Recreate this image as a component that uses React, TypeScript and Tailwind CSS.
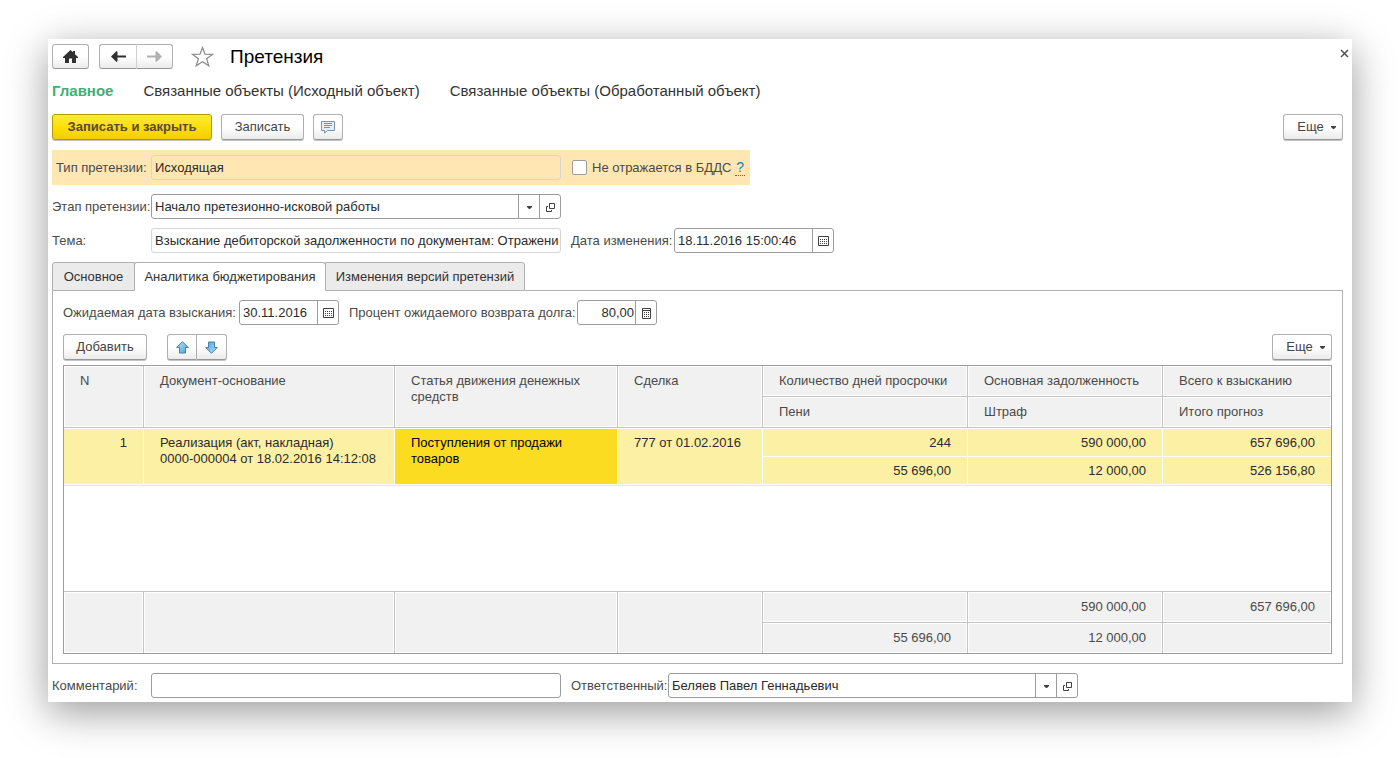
import type { ReactNode } from "react";

const textCell = "border-r border-b border-[#c4c4c4] bg-[#f1f1f1] shadow-[inset_0_0_0_1px_white] px-4 font-normal";
const headCell = textCell + " pt-[7px] text-left align-top leading-4";
const footCell = textCell + " text-right align-middle";
const rowCell = "border-r border-b border-white bg-[#fcf0a5] px-4";
const topCell = rowCell + " border-t pt-[6px] align-top leading-4";

const HomeIcon = () => (
  <svg width="15" height="13" viewBox="0 0 15 13" fill="#303030">
    <path d="M7.500 0 10 2.300V1h2v3.200L15 7V8H13v5H9V8.500H6V13H2V8H0V7Z" />
  </svg>
);

const ArrowIcon = ({ color, flip }: { color: string; flip?: boolean }) => (
  <svg width="15" height="11" viewBox="0 0 15 11" className={flip ? "-scale-x-100" : ""}>
    <path d="M0 5.500 5.500 0 6.500 1V4.500H15V6.500H6.500V10L5.500 11Z" fill={color} />
  </svg>
);

const StarIcon = () => (
  <svg width="23" height="21" viewBox="0 0 23 21" fill="white" stroke="#8a8a8a" strokeWidth="1.200">
    <path d="M11.500 1.500 14 8.200 21.500 8.400 15.600 12.800 17.800 19.800 11.500 15.700 5.200 19.800 7.400 12.800 1.500 8.400 9 8.200Z" />
  </svg>
);

const CommentIcon = () => (
  <svg width="14" height="13" viewBox="0 0 14 13" fill="none" stroke="#6f96b8">
    <path d="M.5 .5H13.500V9.500H6.500L3.500 12V9.500H.5Z" fill="#e3eef7" />
    <path d="M3 2.500H11M3 4.500H11M3 6.500H9" />
  </svg>
);

const MoveIcon = ({ down }: { down?: boolean }) => (
  <svg width="13" height="13" viewBox="0 0 13 13" className={down ? "rotate-180" : ""}>
    <defs>
      <linearGradient id={down ? "moveDown" : "moveUp"} x1="0" y1="0" x2="1" y2="1">
        <stop offset="0" stopColor="#b4e0f8" />
        <stop offset="1" stopColor="#4ba3da" />
      </linearGradient>
    </defs>
    <path d="M6.500 .7 12.300 6.500H9.500V12H3.500V6.500H.7Z" fill={down ? "url(#moveDown)" : "url(#moveUp)"} stroke="#4480aa" />
  </svg>
);

const CaretIcon = () => (
  <svg width="5" height="3" viewBox="0 0 5 3" fill="#404040">
    <path d="M0 0H5V1L3 3H2L0 1Z" />
  </svg>
);

const OpenIcon = () => (
  <svg width="9" height="9" viewBox="0 0 9 9" fill="none" stroke="#404040">
    <path d="M3.500 .5H8.500V5.500H3.500ZM2 3.500H.5V8.500H5.500V7" />
  </svg>
);

const CalendarIcon = () => (
  <svg width="11" height="10" viewBox="0 0 11 10" fill="none" stroke="#404040">
    <path d="M.5 .5H10.500V9.500H.5Z" />
    <path d="M2 3.500H9M2 5.500H9M2 7.500H9" strokeDasharray="1 1" />
  </svg>
);

const CalcIcon = () => (
  <svg width="9" height="11" viewBox="0 0 9 11" fill="none" stroke="#404040">
    <path d="M.5 .5H8.500V10.500H.5ZM.5 2.500H8.500" />
    <path d="M2 4.500H7M2 6.500H7M2 8.500H7" strokeDasharray="1 1" />
  </svg>
);

const buttonBase =
  "flex items-center justify-center border border-[#b0b0b0] border-b-[#979797] bg-gradient-to-b from-white from-50% to-[#ebebeb] text-[#444]";

const Button = ({ children, className = "", label }: { children: ReactNode; className?: string; label?: string }) => (
  <button type="button" aria-label={label} className={`${buttonBase} h-[26px] rounded-[3px] shadow-[0_1px_0_#c4c4c4] ${className}`}>
    {children}
  </button>
);

const MoreButton = () => (
  <Button className="w-[60px] gap-[7px] pl-[7px]">
    Еще
    <CaretIcon />
  </Button>
);

const FieldButton = ({ label, children }: { label: string; children: ReactNode }) => (
  <button type="button" aria-label={label} className="flex w-[21px] shrink-0 items-center justify-center border-l border-[#9c9c9c] pt-px">
    {children}
  </button>
);

type FieldProps = { id: string; value?: string; className?: string; inputClass?: string; readOnly?: boolean; children?: ReactNode };

const Field = ({ id, value = "", className = "", inputClass = "", readOnly, children }: FieldProps) => (
  <div className={`flex h-[25px] overflow-hidden rounded-[3px] border ${readOnly ? "border-[#d6d6d6]" : "border-[#9c9c9c]"} ${className}`}>
    <input id={id} type="text" defaultValue={value} readOnly={readOnly} className={`w-0 min-w-0 flex-1 bg-transparent pr-px pl-[3px] text-[#2b2b2b] outline-none ${inputClass}`} />
    {children}
  </div>
);

const SelectField = ({ id, value }: { id: string; value: string }) => (
  <div className="flex h-[25px] w-[410px] rounded-[3px] border border-[#9c9c9c]">
    <div className="relative flex-1">
      <select id={id} className="h-full w-full appearance-none bg-transparent px-[3px] text-[#2b2b2b] outline-none">
        <option>{value}</option>
      </select>
      <span className="pointer-events-none absolute inset-y-0 right-0 flex w-[21px] items-center justify-center border-l border-[#9c9c9c] pt-px">
        <CaretIcon />
      </span>
    </div>
    <FieldButton label="Открыть">
      <OpenIcon />
    </FieldButton>
  </div>
);

const topHeads = ["Количество дней просрочки", "Основная задолженность", "Всего к взысканию"];
const bottomHeads = ["Пени", "Штраф", "Итого прогноз"];

const ClaimTable = () => (
  <div className="mt-1 border border-[#9c9c9c]">
    <table className="w-full table-fixed border-separate border-spacing-0 text-[#4a4a4a] [&_tr>*:last-child]:border-r-0">
      <colgroup>
        <col className="w-[80px]" />
        <col />
        <col className="w-[223px]" />
        <col className="w-[145px]" />
        <col className="w-[205px]" />
        <col className="w-[195px]" />
        <col className="w-[168px]" />
      </colgroup>
      <thead>
        <tr className="h-[31px]">
          <th rowSpan={2} className={headCell}>N</th>
          <th rowSpan={2} className={headCell}>Документ-основание</th>
          <th rowSpan={2} className={headCell}>Статья движения денежных средств</th>
          <th rowSpan={2} className={headCell}>Сделка</th>
          {topHeads.map((head) => (
            <th key={head} className={headCell}>{head}</th>
          ))}
        </tr>
        <tr className="h-[31px]">
          {bottomHeads.map((head) => (
            <th key={head} className={headCell}>{head}</th>
          ))}
        </tr>
      </thead>
      <tbody className="text-[#2b2b2b]">
        <tr className="h-[29px]">
          <td rowSpan={2} className={`${topCell} text-right`}>1</td>
          <td rowSpan={2} className={topCell}>
            Реализация (акт, накладная)
            <br />
            0000-000004 от 18.02.2016 14:12:08
          </td>
          <td rowSpan={2} className="border-t border-r border-b border-white bg-[#fcdc20] px-4 pt-[6px] align-top leading-4 text-black">
            Поступления от продажи товаров
          </td>
          <td rowSpan={2} className={topCell}>777 от 01.02.2016</td>
          <td className={`${topCell} text-right`}>244</td>
          <td className={`${topCell} text-right`}>590 000,00</td>
          <td className={`${topCell} text-right`}>657 696,00</td>
        </tr>
        <tr className="h-[28px]">
          <td className={`${rowCell} text-right`}>55 696,00</td>
          <td className={`${rowCell} text-right`}>12 000,00</td>
          <td className={`${rowCell} text-right`}>526 156,80</td>
        </tr>
        <tr className="h-[107px]">
          <td colSpan={7} className="border-t border-b border-t-[#e4e4e4] border-b-[#c4c4c4]" />
        </tr>
      </tbody>
      <tfoot className="[&_tr:last-child>*]:border-b-0">
        <tr className="h-[31px]">
          <td className={`${footCell} border-b-0`} rowSpan={2} />
          <td className={`${footCell} border-b-0`} rowSpan={2} />
          <td className={`${footCell} border-b-0`} rowSpan={2} />
          <td className={`${footCell} border-b-0`} rowSpan={2} />
          <td className={footCell} />
          <td className={footCell}>590 000,00</td>
          <td className={footCell}>657 696,00</td>
        </tr>
        <tr className="h-[30px]">
          <td className={footCell}>55 696,00</td>
          <td className={footCell}>12 000,00</td>
          <td className={footCell} />
        </tr>
      </tfoot>
    </table>
  </div>
);

const tabBase = "border border-[#b0b0b0] whitespace-nowrap text-[#333]";

export default function App() {
  return (
    <div className="px-12 pt-[39px] pb-14 font-['Liberation_Sans',Arial,sans-serif] text-[13px] text-[#4a4a4a]">
      <main className="bg-white pt-[5px] pr-[9px] pb-1 pl-1 shadow-[0_10px_38px_rgba(0,0,0,0.4)]">
        <header className="flex items-center">
          <button type="button" aria-label="Главная" className={`${buttonBase} h-[25px] w-[37px] rounded-[3px] border-[#a0a0a0]`}>
            <HomeIcon />
          </button>
          <div className="ml-[10px] flex">
            <button type="button" aria-label="Назад" className={`${buttonBase} h-[25px] w-[38px] rounded-l-[3px] border-[#a0a0a0] border-r-[#d0d0d0]`}>
              <ArrowIcon color="#303030" />
            </button>
            <button type="button" aria-label="Вперед" className={`${buttonBase} h-[25px] w-[36px] rounded-r-[3px] border-l-0 border-[#a0a0a0]`}>
              <ArrowIcon color="#b0b0b0" flip />
            </button>
          </div>
          <button type="button" aria-label="В избранное" className="ml-[18px]">
            <StarIcon />
          </button>
          <h1 className="ml-4 text-[19px] leading-6 text-black">Претензия</h1>
          <button type="button" aria-label="Закрыть" className="-mr-[6px] ml-auto pb-[6px]">
            <svg width="9" height="9" viewBox="0 0 9 9" stroke="#505050" strokeWidth="1.500">
              <path d="M1 1 8 8M8 1 1 8" />
            </svg>
          </button>
        </header>

        <nav className="mt-3 flex gap-[30px] text-[15px] leading-5 text-[#333]">
          <a href="#main" className="font-bold text-[#3eb073]">Главное</a>
          <a href="#source">Связанные объекты (Исходный объект)</a>
          <a href="#processed">Связанные объекты (Обработанный объект)</a>
        </nav>

        <div className="mt-[13px] flex gap-[9px]">
          <button type="button" className="h-[26px] w-[160px] rounded-[3px] border border-[#b09a00] bg-gradient-to-b from-[#ffe838] via-[#fddf00] to-[#f0d000] font-bold text-[#564a3c] shadow-[0_1px_0_#c4c4c4]">
            Записать и закрыть
          </button>
          <Button className="w-[83px]">Записать</Button>
          <Button className="w-[30px]" label="Обсуждение">
            <CommentIcon />
          </Button>
          <div className="ml-auto">
            <MoreButton />
          </div>
        </div>

        <div className="mt-[10px] flex h-[35px] w-[698px] items-center bg-[#ffe6b3]">
          <label htmlFor="type" className="w-[99px] pl-1">Тип претензии:</label>
          <Field id="type" value="Исходящая" readOnly className="w-[410px]" />
          <input id="cashflow" type="checkbox" className="ml-[11px] size-[15px] appearance-none rounded-[2px] border border-[#9c9c9c] bg-white checked:bg-[#3eb073]" />
          <label htmlFor="cashflow" className="ml-[5px]">Не отражается в БДДС</label>
          <a href="#help" className="ml-1 border-b border-dotted border-[#1a7ab8] px-px text-sm leading-4 text-[#1a7ab8]">?</a>
        </div>

        <div className="mt-[9px] flex items-center">
          <label htmlFor="stage" className="w-[99px] whitespace-nowrap">Этап претензии:</label>
          <SelectField id="stage" value="Начало претезионно-исковой работы" />
        </div>

        <div className="mt-[9px] flex items-center">
          <label htmlFor="subject" className="w-[99px]">Тема:</label>
          <Field id="subject" value="Взыскание дебиторской задолженности по документам: Отражение" readOnly className="w-[410px]" />
          <label htmlFor="changed" className="ml-[10px] w-[103px] whitespace-nowrap">Дата изменения:</label>
          <Field id="changed" value="18.11.2016 15:00:46" className="w-[160px]">
            <FieldButton label="Выбрать дату">
              <CalendarIcon />
            </FieldButton>
          </Field>
        </div>

        <div role="tablist" className="mt-[9px] flex h-[29px]">
          <button type="button" role="tab" aria-selected="false" className={`${tabBase} w-[83px] rounded-tl-[3px] bg-[#ebebeb]`}>
            Основное
          </button>
          <button type="button" role="tab" aria-selected="true" className={`${tabBase} -ml-px w-[192px] rounded-t-[3px] border-b-white bg-white`}>
            Аналитика бюджетирования
          </button>
          <button type="button" role="tab" aria-selected="false" className={`${tabBase} -ml-px w-[200px] rounded-tr-[3px] bg-[#ebebeb]`}>
            Изменения версий претензий
          </button>
          <div className="flex-1 border-b border-[#b0b0b0]" />
        </div>
        <section className="border border-t-0 border-[#b0b0b0] px-[10px] pt-[9px] pb-[9px]">
          <div className="flex items-center">
            <label htmlFor="expected" className="w-[176px] whitespace-nowrap">Ожидаемая дата взыскания:</label>
            <Field id="expected" value="30.11.2016" className="w-[100px]">
              <FieldButton label="Выбрать дату">
                <CalendarIcon />
              </FieldButton>
            </Field>
            <label htmlFor="percent" className="ml-[10px] w-[228px] whitespace-nowrap">Процент ожидаемого возврата долга:</label>
            <Field id="percent" value="80,00" inputClass="text-right" className="w-[80px]">
              <FieldButton label="Калькулятор">
                <CalcIcon />
              </FieldButton>
            </Field>
          </div>
          <div className="mt-[9px] mb-[5px] flex">
            <Button className="w-[84px]">Добавить</Button>
            <Button className="ml-5 w-[30px] rounded-r-none" label="Переместить вверх">
              <MoveIcon />
            </Button>
            <Button className="w-[30px] rounded-l-none border-l-0" label="Переместить вниз">
              <MoveIcon down />
            </Button>
            <div className="ml-auto">
              <MoreButton />
            </div>
          </div>
          <ClaimTable />
        </section>

        <footer className="mt-[9px] flex items-center">
          <label htmlFor="comment" className="w-[99px]">Комментарий:</label>
          <Field id="comment" className="w-[410px]" />
          <label htmlFor="owner" className="ml-[10px] w-[97px] whitespace-nowrap">Ответственный:</label>
          <SelectField id="owner" value="Беляев Павел Геннадьевич" />
        </footer>
      </main>
    </div>
  );
}
